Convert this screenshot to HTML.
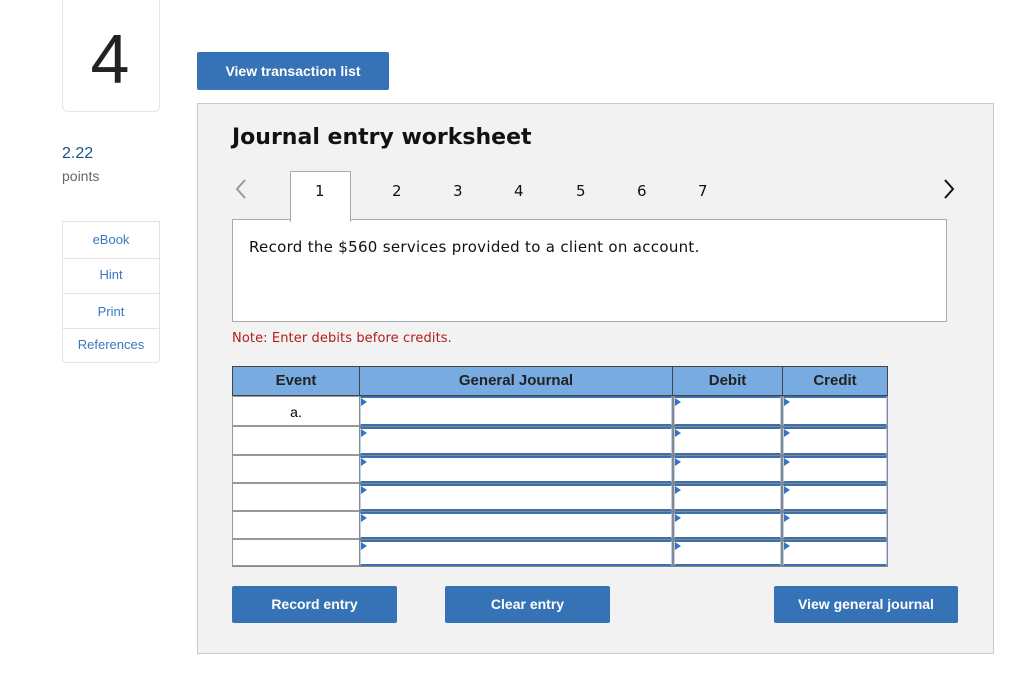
<!DOCTYPE html><html><head><style>
body{margin:0;width:1024px;height:677px;background:#fff;font-family:"Liberation Sans",sans-serif;position:relative;overflow:hidden}
.a{position:absolute}
.btn{position:absolute;background:#3673b6;color:#fff;font-weight:bold;font-size:14px;text-align:center;border-radius:2px}
.side{position:absolute;left:62px;width:96px;border:1px solid #e3e3e3;color:#3a78c0;font-size:13px;text-align:center}
.tab{position:absolute;top:182px;font-size:15px;font-family:"DejaVu Sans",sans-serif;color:#111}
.cell{position:absolute;background:#fff;box-sizing:border-box}
.ev{border:1px solid #999;border-right:none}
.in{border:1px solid #b8d0ea;border-bottom:2px solid #3a6fb0;border-top:2px solid #3a6fb0}
.in:before{content:"";position:absolute;left:0;top:0;border-left:6px solid #3a74c0;border-top:4px solid transparent;border-bottom:4px solid transparent}
.h{position:absolute;top:366px;height:30px;background:#77abe1;border:1px solid #444;box-sizing:border-box;font-weight:bold;font-size:15px;text-align:center;line-height:28px;color:#222}
</style></head><body>
<div class="a" style="left:62px;top:-5px;width:96px;height:115px;border:1px solid #e6e6e6;border-radius:6px"></div>
<div class="a" style="left:62px;top:19px;width:96px;font-size:70px;text-align:center;line-height:80px;color:#222">4</div>
<div class="a" style="left:62px;top:145px;font-size:16px;color:#1e4f8c">2.22</div>
<div class="a" style="left:62px;top:168px;font-size:14px;color:#666">points</div>
<div class="side" style="top:221px;height:36px;line-height:36px">eBook</div>
<div class="side" style="top:257px;height:36px;line-height:36px;border-top:none">Hint</div>
<div class="side" style="top:293px;height:35px;line-height:38px;border-top:none">Print</div>
<div class="side" style="top:328px;height:34px;line-height:34px;border-top:none;border-radius:0 0 4px 4px">References</div>
<div class="btn" style="left:197px;top:52px;width:192px;height:38px;line-height:38px">View transaction list</div>
<div class="a" style="left:197px;top:103px;width:795px;height:549px;background:#f2f2f2;border:1px solid #c9c9c9"></div>
<div class="a" style="left:232px;top:125px;font-family:'DejaVu Sans',sans-serif;font-weight:bold;font-size:22px;color:#111">Journal entry worksheet</div>
<svg class="a" style="left:234px;top:178px" width="14" height="22"><path d="M11 2 L3 11 L11 20" fill="none" stroke="#999" stroke-width="2"/></svg>
<svg class="a" style="left:942px;top:178px" width="14" height="22"><path d="M3 2 L11 11 L3 20" fill="none" stroke="#111" stroke-width="2"/></svg>
<div class="a" style="left:232px;top:219px;width:713px;height:101px;background:#fff;border:1px solid #aaa"></div>
<div class="a" style="left:290px;top:171px;width:59px;height:50px;background:#fff;border:1px solid #aaa;border-bottom:none"></div>
<div class="tab" style="left:315px">1</div><div class="tab" style="left:392px">2</div><div class="tab" style="left:453px">3</div><div class="tab" style="left:514px">4</div><div class="tab" style="left:576px">5</div><div class="tab" style="left:637px">6</div><div class="tab" style="left:698px">7</div>
<div class="a" style="left:249px;top:238px;font-family:'DejaVu Sans',sans-serif;font-size:15px;letter-spacing:0.3px;color:#111">Record the $560 services provided to a client on account.</div>
<div class="a" style="left:232px;top:331px;font-family:'DejaVu Sans',sans-serif;font-size:13px;letter-spacing:0.1px;color:#b01c1c">Note: Enter debits before credits.</div>
<div class="h" style="left:232px;width:128px">Event</div>
<div class="h" style="left:359px;width:314px">General Journal</div>
<div class="h" style="left:672px;width:111px">Debit</div>
<div class="h" style="left:782px;width:106px">Credit</div>
<div class="a" style="left:232px;top:396px;width:656px;height:171px;background:#888"></div>
<div class="cell ev" style="left:232px;top:396px;width:127px;height:30px;text-align:center;font-size:14px;line-height:30px">a.</div>
<div class="cell ev" style="left:232px;top:426px;width:127px;height:29px"></div>
<div class="cell ev" style="left:232px;top:455px;width:127px;height:28px"></div>
<div class="cell ev" style="left:232px;top:483px;width:127px;height:28px"></div>
<div class="cell ev" style="left:232px;top:511px;width:127px;height:28px"></div>
<div class="cell ev" style="left:232px;top:539px;width:127px;height:27px"></div>
<div class="cell in" style="left:360px;top:396px;width:312px;height:30px"></div><div class="cell in" style="left:674px;top:396px;width:107px;height:30px"></div><div class="cell in" style="left:783px;top:396px;width:104px;height:30px"></div>
<div class="cell in" style="left:360px;top:427px;width:312px;height:28px"></div><div class="cell in" style="left:674px;top:427px;width:107px;height:28px"></div><div class="cell in" style="left:783px;top:427px;width:104px;height:28px"></div>
<div class="cell in" style="left:360px;top:456px;width:312px;height:27px"></div><div class="cell in" style="left:674px;top:456px;width:107px;height:27px"></div><div class="cell in" style="left:783px;top:456px;width:104px;height:27px"></div>
<div class="cell in" style="left:360px;top:484px;width:312px;height:27px"></div><div class="cell in" style="left:674px;top:484px;width:107px;height:27px"></div><div class="cell in" style="left:783px;top:484px;width:104px;height:27px"></div>
<div class="cell in" style="left:360px;top:512px;width:312px;height:27px"></div><div class="cell in" style="left:674px;top:512px;width:107px;height:27px"></div><div class="cell in" style="left:783px;top:512px;width:104px;height:27px"></div>
<div class="cell in" style="left:360px;top:540px;width:312px;height:26px"></div><div class="cell in" style="left:674px;top:540px;width:107px;height:26px"></div><div class="cell in" style="left:783px;top:540px;width:104px;height:26px"></div>
<div class="btn" style="left:232px;top:586px;width:165px;height:37px;line-height:37px">Record entry</div>
<div class="btn" style="left:445px;top:586px;width:165px;height:37px;line-height:37px">Clear entry</div>
<div class="btn" style="left:774px;top:586px;width:184px;height:37px;line-height:37px">View general journal</div>
</body></html>
